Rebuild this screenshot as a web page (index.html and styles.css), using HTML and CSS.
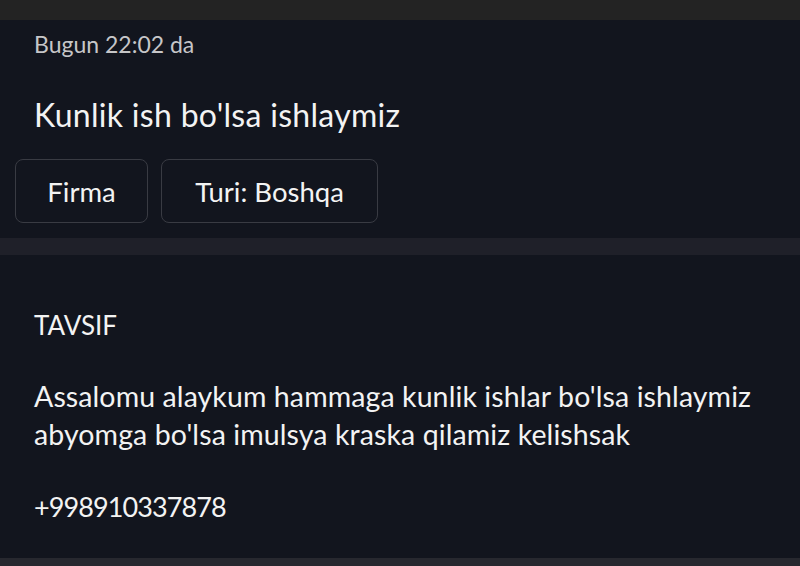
FILE: index.html
```
<!DOCTYPE html>
<html>
<head>
<meta charset="utf-8">
<link rel="stylesheet" href="styles.css">
</head>
<body>
<div class="topbar"></div>
<section class="head">
  <div class="time">Bugun 22:02 da</div>
  <h1 class="title">Kunlik ish bo'lsa ishlaymiz</h1>
  <div class="tags">
    <div class="tag tag-firma">Firma</div>
    <div class="tag tag-type">Turi: Boshqa</div>
  </div>
</section>
<div class="sep"></div>
<section class="desc">
  <div class="label">TAVSIF</div>
  <p class="text">Assalomu alaykum hammaga kunlik ishlar bo'lsa ishlaymiz<br>abyomga bo'lsa imulsya kraska qilamiz kelishsak</p>
  <p class="phone">+998910337878</p>
</section>
<div class="bottom"></div>
</body>
</html>
```
FILE: styles.css
```
html, body {
  margin: 0;
  padding: 0;
  background: #12151e;
  width: 800px;
  height: 566px;
  overflow: hidden;
  font-family: Lato, "Open Sans", sans-serif;
  color: #f3f3f3;
}
.topbar {
  height: 20px;
  background: #232323;
}
.head {
  padding: 10px 0 0 34px;
  height: 218px;
  box-sizing: border-box;
}
.time {
  font-size: 23px;
  line-height: 28px;
  color: #c6c6c8;
}
.title {
  margin: 37px 0 0 0;
  font-size: 32px;
  font-weight: 400;
  line-height: 40px;
  letter-spacing: 0.3px;
}
.tags {
  display: flex;
  gap: 13px;
  margin: 24px 0 0 -19px;
}
.tag {
  height: 64px;
  box-sizing: border-box;
  border: 1.5px solid #393b43;
  border-radius: 8px;
  display: flex;
  align-items: center;
  justify-content: center;
  font-size: 27.5px;
}
.tag-firma { width: 133px; }
.tag-type { width: 217px; }
.sep {
  height: 17px;
  background: #1f2029;
}
.desc {
  padding: 54px 0 0 34px;
  height: 303px;
  box-sizing: border-box;
}
.label {
  font-size: 26px;
  line-height: 32px;
}
.text {
  margin: 36px 0 0 0;
  font-size: 28.5px;
  line-height: 38px;
  letter-spacing: 0.1px;
}
.phone {
  margin: 34.5px 0 0 0;
  font-size: 27px;
  line-height: 38px;
  letter-spacing: -0.9px;
}
.bottom {
  height: 8px;
  background: #27282f;
}
```
